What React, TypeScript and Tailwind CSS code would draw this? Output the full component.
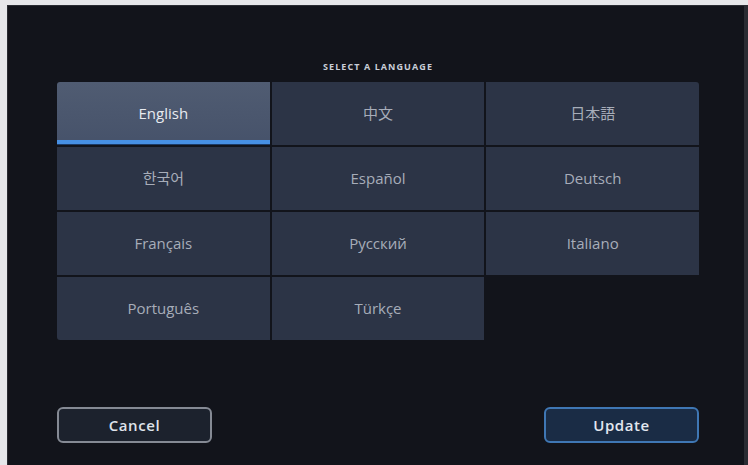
import React from "react";

const langs = [
  "English",
  "中文",
  "日本語",
  "한국어",
  "Español",
  "Deutsch",
  "Français",
  "Русский",
  "Italiano",
  "Português",
  "Türkçe",
];

export default function App() {
  return (
    <div
      className="w-[748px] h-[465px] bg-[#e6e7ea] pl-[7px] pt-[5px] overflow-hidden"
      style={{ fontFamily: '"Open Sans", "Noto Sans CJK JP", "Noto Sans CJK KR", sans-serif' }}
    >
      <div className="h-[460px] w-[741px] bg-[#12141b] border-r-[4px] border-l border-t border-[#2a2c33] flex flex-col pl-[49px] pr-[45px]">
        <div className="pt-[56px] h-[76px] text-center text-[9px] leading-[10px] font-bold tracking-[0.12em] text-[#c9ced8]">
          SELECT A LANGUAGE
        </div>
        <div className="grid grid-cols-3 gap-[2px] rounded-[3px] overflow-hidden">
          {langs.map((l, i) =>
            i === 0 ? (
              <div
                key={l}
                className="h-[63px] flex flex-col bg-gradient-to-b from-[#505c72] to-[#46526a]"
              >
                <div className="flex-1 flex items-center justify-center text-[15px] text-[#e8ebf0] pt-[4px]">
                  {l}
                </div>
                <div className="h-[5px] bg-[#4790e4] border-b border-[#1d3b66]" />
              </div>
            ) : (
              <div
                key={l}
                className="h-[63px] flex items-center justify-center bg-[#2c3446] text-[15px] text-[#a7adb9]"
              >
                {l}
              </div>
            )
          )}
        </div>
        <div className="mt-[67px] flex justify-between">
          <button className="w-[155px] h-[36px] rounded-[6px] border-2 border-[#858a94] bg-[#1c222d] text-[15px] font-semibold tracking-[0.04em] text-[#dfe3ea]">
            Cancel
          </button>
          <button className="w-[155px] h-[36px] rounded-[6px] border-2 border-[#3f77b4] bg-[#1a2c45] text-[15px] font-semibold tracking-[0.04em] text-[#e2e7ef]">
            Update
          </button>
        </div>
      </div>
    </div>
  );
}
